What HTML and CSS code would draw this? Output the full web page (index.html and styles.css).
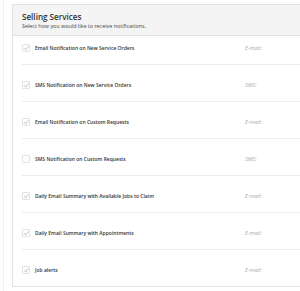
FILE: index.html
```html
<!DOCTYPE html>
<html lang="en">
<head>
    <title>Selling Services</title>
    <link rel="stylesheet" href="styles.css">
</head>
<body>
    <div class="page">
        <div class="panel">
            <div class="panel_head">
                <h2>Selling Services</h2>
                <p>Select how you would like to receive notifications.</p>
            </div>
            <ul class="rows">
                <li class="row">
                    <span class="box checked"></span>
                    <span class="label">Email Notification on New Service Orders</span>
                    <span class="kind">E-mail:</span>
                </li>
                <li class="row">
                    <span class="box checked"></span>
                    <span class="label">SMS Notification on New Service Orders</span>
                    <span class="kind">SMS:</span>
                </li>
                <li class="row">
                    <span class="box checked"></span>
                    <span class="label">Email Notification on Custom Requests</span>
                    <span class="kind">E-mail:</span>
                </li>
                <li class="row">
                    <span class="box"></span>
                    <span class="label">SMS Notification on Custom Requests</span>
                    <span class="kind">SMS:</span>
                </li>
                <li class="row">
                    <span class="box checked"></span>
                    <span class="label">Daily Email Summary with Available Jobs to Claim</span>
                    <span class="kind">E-mail:</span>
                </li>
                <li class="row">
                    <span class="box checked"></span>
                    <span class="label">Daily Email Summary with Appointments</span>
                    <span class="kind">E-mail:</span>
                </li>
                <li class="row">
                    <span class="box checked"></span>
                    <span class="label">Job alerts</span>
                    <span class="kind">E-mail:</span>
                </li>
            </ul>
        </div>
    </div>
</body>
</html>
```

FILE: styles.css
```css
body {
    font-family: "Open Sans", Arial, sans-serif;
    margin: 0;
    padding: 0;
    background-color: #fff;
    color: #333;
}
.page {
    padding: 4px 0 6px 3px;
    border-left: 1px solid #f0f0f0;
    margin-left: 3px;
    width: 294px;
    overflow: hidden;
}
.panel {
    margin-left: 5px;
    width: 300px;
    border: 1px solid #e3e3e3;
    border-right: none;
}
.panel_head {
    background-color: #f4f4f4;
    border-bottom: 1px solid #e3e3e3;
    padding: 6px 9px 5px;
    height: 19px;
}
.panel_head h2 {
    margin: 0;
    font-size: 8.1px;
    font-weight: 600;
    line-height: 11px;
    color: #333;
}
.panel_head p {
    margin: 1px 0 0;
    font-size: 5.4px;
    line-height: 7px;
    color: #444;
}
.rows {
    list-style: none;
    margin: 0;
    padding: 0 0 0 9px;
}
.row {
    display: flex;
    align-items: center;
    height: 6px;
    padding: 17px 0 13px;
    border-bottom: 1px solid #ececec;
}
.row:first-child {
    padding-top: 9px;
}
.row:last-child {
    border-bottom: none;
}
.box {
    width: 6px;
    height: 6px;
    border: 1px solid #e2e2e2;
    border-radius: 1px;
    position: relative;
    flex-shrink: 0;
}
.box.checked::after {
    content: "";
    position: absolute;
    left: 2px;
    top: 0;
    width: 1.5px;
    height: 3.5px;
    border-right: 1px solid #cfcfcf;
    border-bottom: 1px solid #cfcfcf;
    transform: rotate(40deg);
}
.label {
    margin-left: 5px;
    font-size: 5px;
    font-weight: 600;
    width: 210px;
    white-space: nowrap;
}
.kind {
    font-size: 5.6px;
    font-style: italic;
    color: #aaa;
}
```
